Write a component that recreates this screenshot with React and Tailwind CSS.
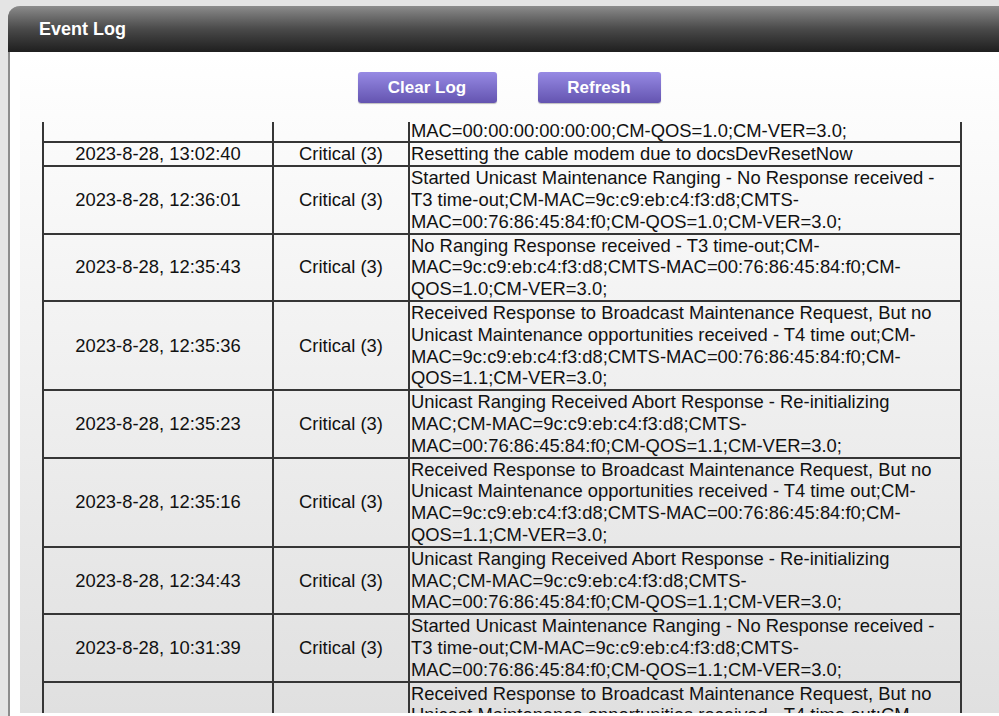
import React from "react";

const rows = [
  {
    date: "2023-8-28, 13:03:05",
    lines: [
      "No Ranging Response received - T3 time-out;CM-",
      "MAC=9c:c9:eb:c4:f3:d8;CMTS-",
      "MAC=00:00:00:00:00:00;CM-QOS=1.0;CM-VER=3.0;",
    ],
  },
  {
    date: "2023-8-28, 13:02:40",
    lines: ["Resetting the cable modem due to docsDevResetNow"],
  },
  {
    date: "2023-8-28, 12:36:01",
    lines: [
      "Started Unicast Maintenance Ranging - No Response received -",
      "T3 time-out;CM-MAC=9c:c9:eb:c4:f3:d8;CMTS-",
      "MAC=00:76:86:45:84:f0;CM-QOS=1.0;CM-VER=3.0;",
    ],
  },
  {
    date: "2023-8-28, 12:35:43",
    lines: [
      "No Ranging Response received - T3 time-out;CM-",
      "MAC=9c:c9:eb:c4:f3:d8;CMTS-MAC=00:76:86:45:84:f0;CM-",
      "QOS=1.0;CM-VER=3.0;",
    ],
  },
  {
    date: "2023-8-28, 12:35:36",
    lines: [
      "Received Response to Broadcast Maintenance Request, But no",
      "Unicast Maintenance opportunities received - T4 time out;CM-",
      "MAC=9c:c9:eb:c4:f3:d8;CMTS-MAC=00:76:86:45:84:f0;CM-",
      "QOS=1.1;CM-VER=3.0;",
    ],
  },
  {
    date: "2023-8-28, 12:35:23",
    lines: [
      "Unicast Ranging Received Abort Response - Re-initializing",
      "MAC;CM-MAC=9c:c9:eb:c4:f3:d8;CMTS-",
      "MAC=00:76:86:45:84:f0;CM-QOS=1.1;CM-VER=3.0;",
    ],
  },
  {
    date: "2023-8-28, 12:35:16",
    lines: [
      "Received Response to Broadcast Maintenance Request, But no",
      "Unicast Maintenance opportunities received - T4 time out;CM-",
      "MAC=9c:c9:eb:c4:f3:d8;CMTS-MAC=00:76:86:45:84:f0;CM-",
      "QOS=1.1;CM-VER=3.0;",
    ],
  },
  {
    date: "2023-8-28, 12:34:43",
    lines: [
      "Unicast Ranging Received Abort Response - Re-initializing",
      "MAC;CM-MAC=9c:c9:eb:c4:f3:d8;CMTS-",
      "MAC=00:76:86:45:84:f0;CM-QOS=1.1;CM-VER=3.0;",
    ],
  },
  {
    date: "2023-8-28, 10:31:39",
    lines: [
      "Started Unicast Maintenance Ranging - No Response received -",
      "T3 time-out;CM-MAC=9c:c9:eb:c4:f3:d8;CMTS-",
      "MAC=00:76:86:45:84:f0;CM-QOS=1.1;CM-VER=3.0;",
    ],
  },
  {
    date: "2023-8-28, 10:31:20",
    lines: [
      "Received Response to Broadcast Maintenance Request, But no",
      "Unicast Maintenance opportunities received - T4 time out;CM-",
      "MAC=9c:c9:eb:c4:f3:d8;CMTS-MAC=00:76:86:45:84:f0;CM-",
      "QOS=1.1;CM-VER=3.0;",
    ],
  },
];

function PurpleButton({ children, className }) {
  return (
    <button
      className={`h-[31px] rounded-[3px] bg-gradient-to-b from-[#978ae4] to-[#6454b0] text-white font-bold text-[17px] shadow-[0_1px_1px_rgba(0,0,0,0.25)] ${className}`}
    >
      {children}
    </button>
  );
}

export default function App() {
  return (
    <div
      className="h-[716px] overflow-hidden bg-[#e4e4e4] pt-[6px] pl-[8px]"
      style={{ fontFamily: '"Liberation Sans", Arial, sans-serif' }}
    >
      <div className="border-l-2 border-[#8c8c8c] rounded-tl-[12px] bg-white h-full">
        {/* title bar */}
        <div className="h-[46px] -ml-[2px] rounded-tl-[12px] bg-gradient-to-b from-[#8c8c8c] via-[#4a4a4a] to-[#1f1f1f] flex items-center pl-[31px]">
          <h1 className="text-white font-bold text-[18px]">Event Log</h1>
        </div>

        <div className="pl-[10px]">
          <div className="h-[661px] bg-gradient-to-b from-white to-[#e0e0e0] flex flex-col">
            <div className="flex justify-center gap-[41px] pt-[20px] pr-[1px]">
              <PurpleButton className="w-[139px]">Clear Log</PurpleButton>
              <PurpleButton className="w-[123px]">Refresh</PurpleButton>
            </div>

            {/* scrolled log area */}
            <div className="mt-[19px] h-[591px] overflow-hidden pl-[22px]">
              <table className="-mt-[48px] w-[918px] table-fixed border-collapse text-[18.4px] leading-[21.8px] text-[#111]">
                <colgroup>
                  <col className="w-[230px]" />
                  <col className="w-[136px]" />
                  <col className="w-[552px]" />
                </colgroup>
                <tbody>
                  {rows.map((row, i) => (
                    <tr key={i}>
                      <td className="border-2 border-[#363636] text-center align-middle p-0">
                        {row.date}
                      </td>
                      <td className="border-2 border-[#363636] text-center align-middle p-0">
                        Critical (3)
                      </td>
                      <td className="border-2 border-[#363636] align-middle py-0 px-[1px] whitespace-nowrap">
                        {row.lines.map((l, j) => (
                          <div key={j}>{l}</div>
                        ))}
                      </td>
                    </tr>
                  ))}
                </tbody>
              </table>
            </div>
          </div>
        </div>
      </div>
    </div>
  );
}
